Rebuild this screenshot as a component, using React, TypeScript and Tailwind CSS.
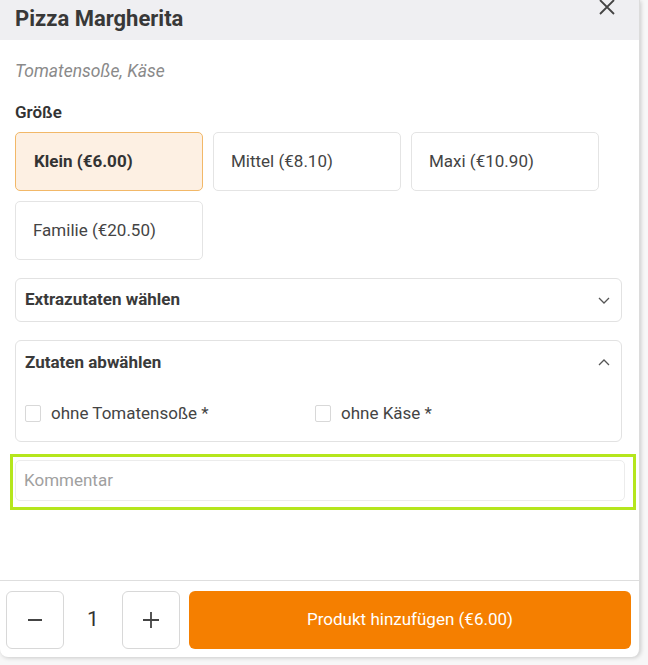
import React from "react";

function ChevronDown() {
  return (
    <svg width="14" height="14" viewBox="0 0 14 14" fill="none" stroke="#555" strokeWidth="1.3">
      <path d="M2 5 L7 10 L12 5" />
    </svg>
  );
}
function ChevronUp() {
  return (
    <svg width="14" height="14" viewBox="0 0 14 14" fill="none" stroke="#555" strokeWidth="1.3">
      <path d="M2 9 L7 4 L12 9" />
    </svg>
  );
}

export default function App() {
  const sizes = [
    { label: "Klein (€6.00)", selected: true },
    { label: "Mittel (€8.10)" },
    { label: "Maxi (€10.90)" },
    { label: "Familie (€20.50)" },
  ];
  return (
    <div className="w-[648px] h-[665px] bg-[#f7f7f7] overflow-hidden" style={{ fontFamily: "Roboto, 'Noto Sans', sans-serif" }}>
      <div className="w-[640px] h-[657px] bg-white rounded-b-[8px] shadow-[1px_1px_4px_rgba(0,0,0,0.18)] border-r border-[#dcdcdc] flex flex-col">
        <div className="h-[40px] bg-[#efeff2] flex items-start justify-between pl-[15px] pr-[22px] shrink-0">
          <h1 className="text-[22px] font-bold text-[#383838] leading-[40px] mt-[-1px]">Pizza Margherita</h1>
          <svg width="20" height="20" viewBox="0 0 20 20" className="mt-[-3px]" stroke="#444" strokeWidth="1.8" fill="none">
            <path d="M3 3 L17 17 M17 3 L3 17" />
          </svg>
        </div>
        <div className="flex-1 px-[15px] pt-[20px]">
          <p className="text-[17.5px] italic text-[#8a8a8a] leading-[22px]">Tomatensoße, Käse</p>
          <p className="text-[17px] font-semibold text-[#333] mt-[19px] leading-[22px]">Größe</p>
          <div className="grid grid-cols-[188px_188px_188px] gap-x-[10px] gap-y-[10px] mt-[9px]">
            {sizes.map((s) => (
              <div
                key={s.label}
                className={
                  s.selected
                    ? "h-[59px] rounded-[5px] border border-[#f2b868] bg-[#fdf0e3] flex items-center pl-[18px] text-[17px] font-bold text-[#333]"
                    : "h-[59px] rounded-[5px] border border-[#e4e4e4] bg-white flex items-center pl-[17px] text-[17px] text-[#444]"
                }
              >
                {s.label}
              </div>
            ))}
          </div>
          <div className="mt-[18px] w-[607px] h-[44px] rounded-[6px] border border-[#e2e2e2] flex items-center justify-between pl-[9px] pr-[10px]">
            <span className="text-[17px] font-bold text-[#3a3a3a]">Extrazutaten wählen</span>
            <ChevronDown />
          </div>
          <div className="mt-[18px] w-[607px] h-[102px] rounded-[6px] border border-[#e2e2e2] flex flex-col pl-[9px] pr-[10px]">
            <div className="h-[44px] flex items-center justify-between">
              <span className="text-[17px] font-bold text-[#3a3a3a]">Zutaten abwählen</span>
              <ChevronUp />
            </div>
            <div className="flex mt-[16px] items-center">
              <label className="flex items-center w-[290px]">
                <span className="w-[16px] h-[17px] border border-[#d8d8d8] rounded-[2px] bg-white" />
                <span className="ml-[10px] text-[17px] text-[#444]">ohne Tomatensoße *</span>
              </label>
              <label className="flex items-center">
                <span className="w-[16px] h-[17px] border border-[#d8d8d8] rounded-[2px] bg-white" />
                <span className="ml-[10px] text-[17px] text-[#444]">ohne Käse *</span>
              </label>
            </div>
          </div>
          <div className="mt-[12px] ml-[-5px] w-[626px] h-[56px] border-[3px] border-[#b5e61d] p-[3px] pl-[2px]">
            <div className="w-[610px] h-[41px] rounded-[5px] border border-[#ececec] flex items-center pl-[8px] text-[17px] text-[#a0a0a0]">
              Kommentar
            </div>
          </div>
        </div>
        <div className="h-[77px] border-t border-[#dedede] flex items-start pt-[10px] pl-[6px] pr-[8px] shrink-0">
          <button className="w-[58px] h-[58px] rounded-[6px] border border-[#d8d8d8] bg-white flex items-center justify-center">
            <svg width="18" height="18" viewBox="0 0 18 18" stroke="#444" strokeWidth="2"><path d="M2 9 H16" /></svg>
          </button>
          <div className="w-[58px] h-[58px] flex items-center justify-center text-[21px] text-[#333]">1</div>
          <button className="w-[58px] h-[58px] rounded-[6px] border border-[#d8d8d8] bg-white flex items-center justify-center">
            <svg width="18" height="18" viewBox="0 0 18 18" stroke="#444" strokeWidth="1.8"><path d="M1 9 H17 M9 1 V17" /></svg>
          </button>
          <button className="ml-[9px] flex-1 h-[58px] rounded-[6px] bg-[#f57f00] text-white text-[17px] flex items-center justify-center">
            Produkt hinzufügen (€6.00)
          </button>
        </div>
      </div>
    </div>
  );
}
